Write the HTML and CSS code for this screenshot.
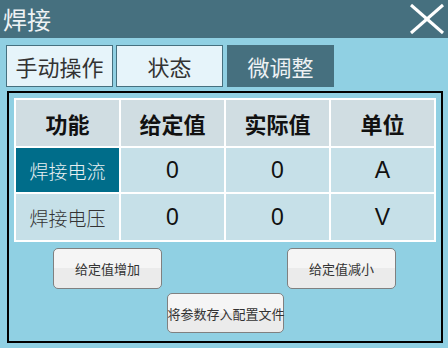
FILE: index.html
```html
<!DOCTYPE html>
<html lang="zh">
<head>
    <meta charset="UTF-8">
    <title>焊接</title>
    <link rel="stylesheet" href="styles.css">
</head>
<body>

<div class="title-bar">
    <span class="title">焊接</span>
    <svg class="close" width="38" height="32" viewBox="0 0 38 32">
        <line x1="3" y1="2" x2="35" y2="30" stroke="#ffffff" stroke-width="3"/>
        <line x1="35" y1="2" x2="3" y2="30" stroke="#ffffff" stroke-width="3"/>
    </svg>
</div>

<div class="tabs">
    <div class="tab">手动操作</div>
    <div class="tab">状态</div>
    <div class="tab active">微调整</div>
</div>

<div class="panel">
    <div class="grid">
        <div class="cell head">功能</div>
        <div class="cell head">给定值</div>
        <div class="cell head">实际值</div>
        <div class="cell head">单位</div>

        <div class="cell name selected">焊接电流</div>
        <div class="cell num">0</div>
        <div class="cell num">0</div>
        <div class="cell num">A</div>

        <div class="cell name">焊接电压</div>
        <div class="cell num">0</div>
        <div class="cell num">0</div>
        <div class="cell num">V</div>
    </div>

    <div class="btn-row">
        <button class="btn">给定值增加</button>
        <button class="btn">给定值减小</button>
    </div>
    <div class="btn-row center">
        <button class="btn save">将参数存入配置文件</button>
    </div>
</div>

</body>
</html>
```

FILE: styles.css
```css
body {
    margin: 0;
    width: 448px;
    height: 348px;
    background-color: #90d0e3;
    font-family: "Noto Sans CJK SC", "Noto Sans", sans-serif;
    overflow: hidden;
}
.title-bar {
    height: 38px;
    background-color: #46707f;
    display: flex;
    align-items: center;
    justify-content: space-between;
    padding: 0 2px 0 3px;
}
.title {
    color: #eef2f4;
    font-size: 24px;
    line-height: 38px;
}
.close {
    display: block;
}
.tabs {
    display: flex;
    gap: 3px;
    margin: 7px 0 0 6px;
}
.tab {
    width: 105px;
    height: 40px;
    border: 1px solid #46707f;
    background-color: #e6f4fa;
    color: #333;
    font-size: 22px;
    display: flex;
    align-items: center;
    justify-content: center;
}
.tab.active {
    background-color: #46707f;
    color: #eef2f4;
    margin-left: 1px;
}
.panel {
    margin: 4px 0 0 7px;
    border: 2px solid #000;
    padding: 5px 5px 0 5px;
    width: 422px;
    height: 243px;
}
.grid {
    display: grid;
    grid-template-columns: repeat(4, 1fr);
    grid-template-rows: 46px 44px 46px;
    gap: 2px;
    padding: 2px;
    background-color: #ffffff;
}
.cell {
    display: flex;
    align-items: center;
    justify-content: center;
    background-color: #c6e0e8;
    color: #111;
    font-size: 23px;
}
.cell.head {
    background-color: #d0dde2;
    font-size: 22px;
    font-weight: bold;
}
.cell.name {
    font-size: 19px;
    font-weight: 300;
    color: #333;
}
.cell.selected {
    background-color: #006d8a;
    color: #e8f0f2;
}
.cell.num {
    font-family: "Liberation Sans", sans-serif;
}
.btn-row {
    display: flex;
    justify-content: space-between;
    padding: 0 40px 0 39px;
    margin-top: 6px;
}
.btn-row.center {
    justify-content: center;
    margin-top: 4px;
    padding: 0;
}
.btn {
    width: 109px;
    height: 41px;
    border: 1px solid #808080;
    border-radius: 5px;
    background: linear-gradient(#f5f5f5 50%, #ebebeb 50%);
    color: #333;
    font-family: "Noto Sans CJK SC", sans-serif;
    font-size: 13px;
    padding: 0;
}
.btn.save {
    width: 117px;
    height: 40px;
    white-space: nowrap;
}
```
